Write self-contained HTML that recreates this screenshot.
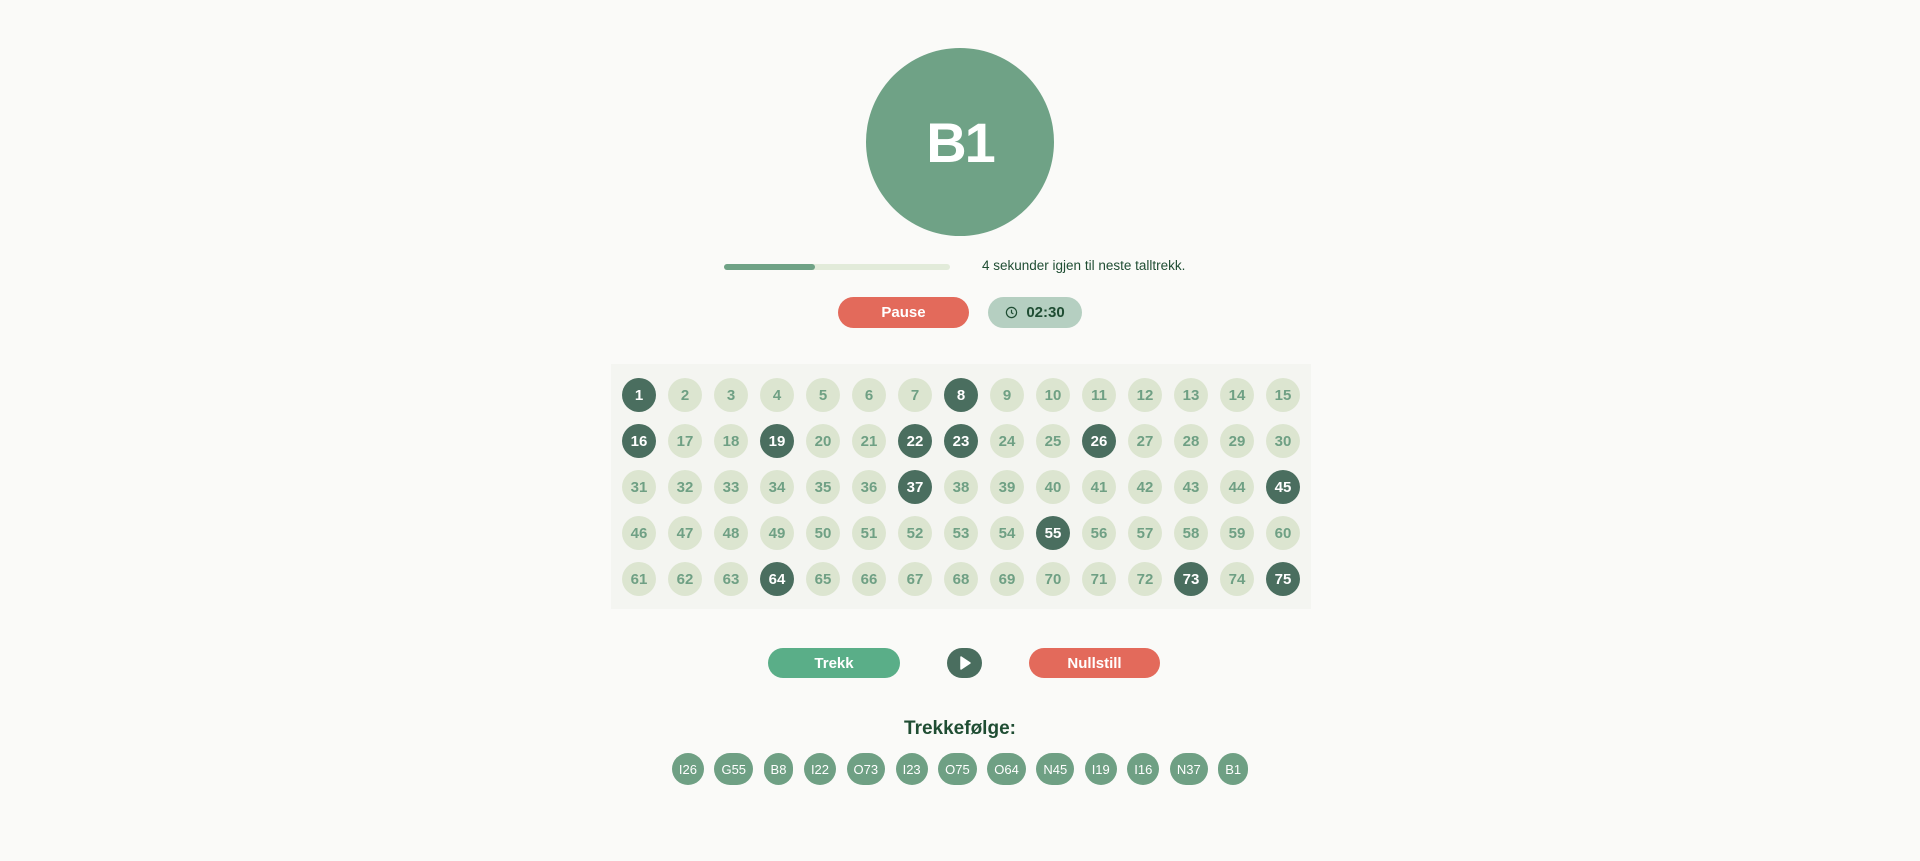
<!DOCTYPE html>
<html><head><meta charset="utf-8"><style>
*{margin:0;padding:0;box-sizing:border-box}
body{width:1920px;height:861px;background:#fafaf8;font-family:"Liberation Sans",sans-serif;position:relative;overflow:hidden}
.big{position:absolute;left:866px;top:48px;width:188px;height:188px;border-radius:50%;background:#6fa286;color:#fff;font-weight:bold;font-size:56px;display:flex;align-items:center;justify-content:center;letter-spacing:-2px}
.bar{position:absolute;left:724px;top:264px;width:226px;height:6px;border-radius:3px;background:#e2ebda}
.bar i{display:block;width:91px;height:6px;border-radius:3px;background:#6fa286}
.txt{position:absolute;left:982px;top:258px;font-size:13.5px;color:#1f4d33}
.btn{position:absolute;height:31px;border-radius:16px;color:#fff;font-weight:bold;font-size:15px;display:flex;align-items:center;justify-content:center}
.panel{position:absolute;left:611px;top:364px;width:700px;height:245px;background:#f4f5f1}
.c{position:absolute;width:34px;height:34px;border-radius:50%;background:#dce5d0;color:#6fa084;font-weight:bold;font-size:15px;display:flex;align-items:center;justify-content:center}
.c.d{background:#4a6e5f;color:#fff}
.h{position:absolute;left:0;width:1920px;top:718px;text-align:center;font-size:19px;font-weight:bold;color:#1f4d33}
.chips{position:absolute;left:0;width:1920px;top:753px;display:flex;justify-content:center;gap:10.5px}
.chips span{height:32px;min-width:28px;padding:0 7px;border-radius:16px;background:#6fa084;color:#fff;font-size:13px;display:flex;align-items:center;justify-content:center}
</style></head><body>
<div class="big">B1</div>
<div class="bar"><i></i></div>
<div class="txt">4 sekunder igjen til neste talltrekk.</div>
<div class="btn" style="left:838px;top:297px;width:131px;background:#e36a5b">Pause</div>
<div class="btn" style="left:988px;top:297px;width:94px;background:#b5cfc1;color:#1f4d33">
<svg width="13" height="13" viewBox="0 0 14 14" style="margin-right:8px"><circle cx="7" cy="7" r="5.5" fill="none" stroke="#1f4d33" stroke-width="1.3"/><path d="M7 4v3.3l2 1.2" fill="none" stroke="#1f4d33" stroke-width="1.3"/></svg>02:30</div>
<div class="panel"></div>
<div class="btn" style="left:768px;top:648px;width:132px;height:30px;background:#5aae88">Trekk</div>
<div class="btn" style="left:947px;top:648px;width:35px;height:30px;background:#4a6e5f"><svg width="14" height="16" viewBox="0 0 14 16"><path d="M3 2L12 8L3 14Z" fill="#fff" stroke="#fff" stroke-width="1.5" stroke-linejoin="round"/></svg></div>
<div class="btn" style="left:1029px;top:648px;width:131px;height:30px;background:#e36a5b">Nullstill</div>
<div class="h">Trekkefølge:</div>
<div class="chips"><span>I26</span><span>G55</span><span>B8</span><span>I22</span><span>O73</span><span>I23</span><span>O75</span><span>O64</span><span>N45</span><span>I19</span><span>I16</span><span>N37</span><span>B1</span></div>
<div id="g"></div>
<script>
var d=[1,8,16,19,22,23,26,37,45,55,64,73,75],h='';
for(var n=1;n<=75;n++){var r=Math.floor((n-1)/15),c=(n-1)%15;
h+='<div class="c'+(d.indexOf(n)>=0?' d':'')+'" style="left:'+(622+c*46)+'px;top:'+(378+r*46)+'px">'+n+'</div>';}
document.getElementById('g').innerHTML=h;
</script>
</body></html>
